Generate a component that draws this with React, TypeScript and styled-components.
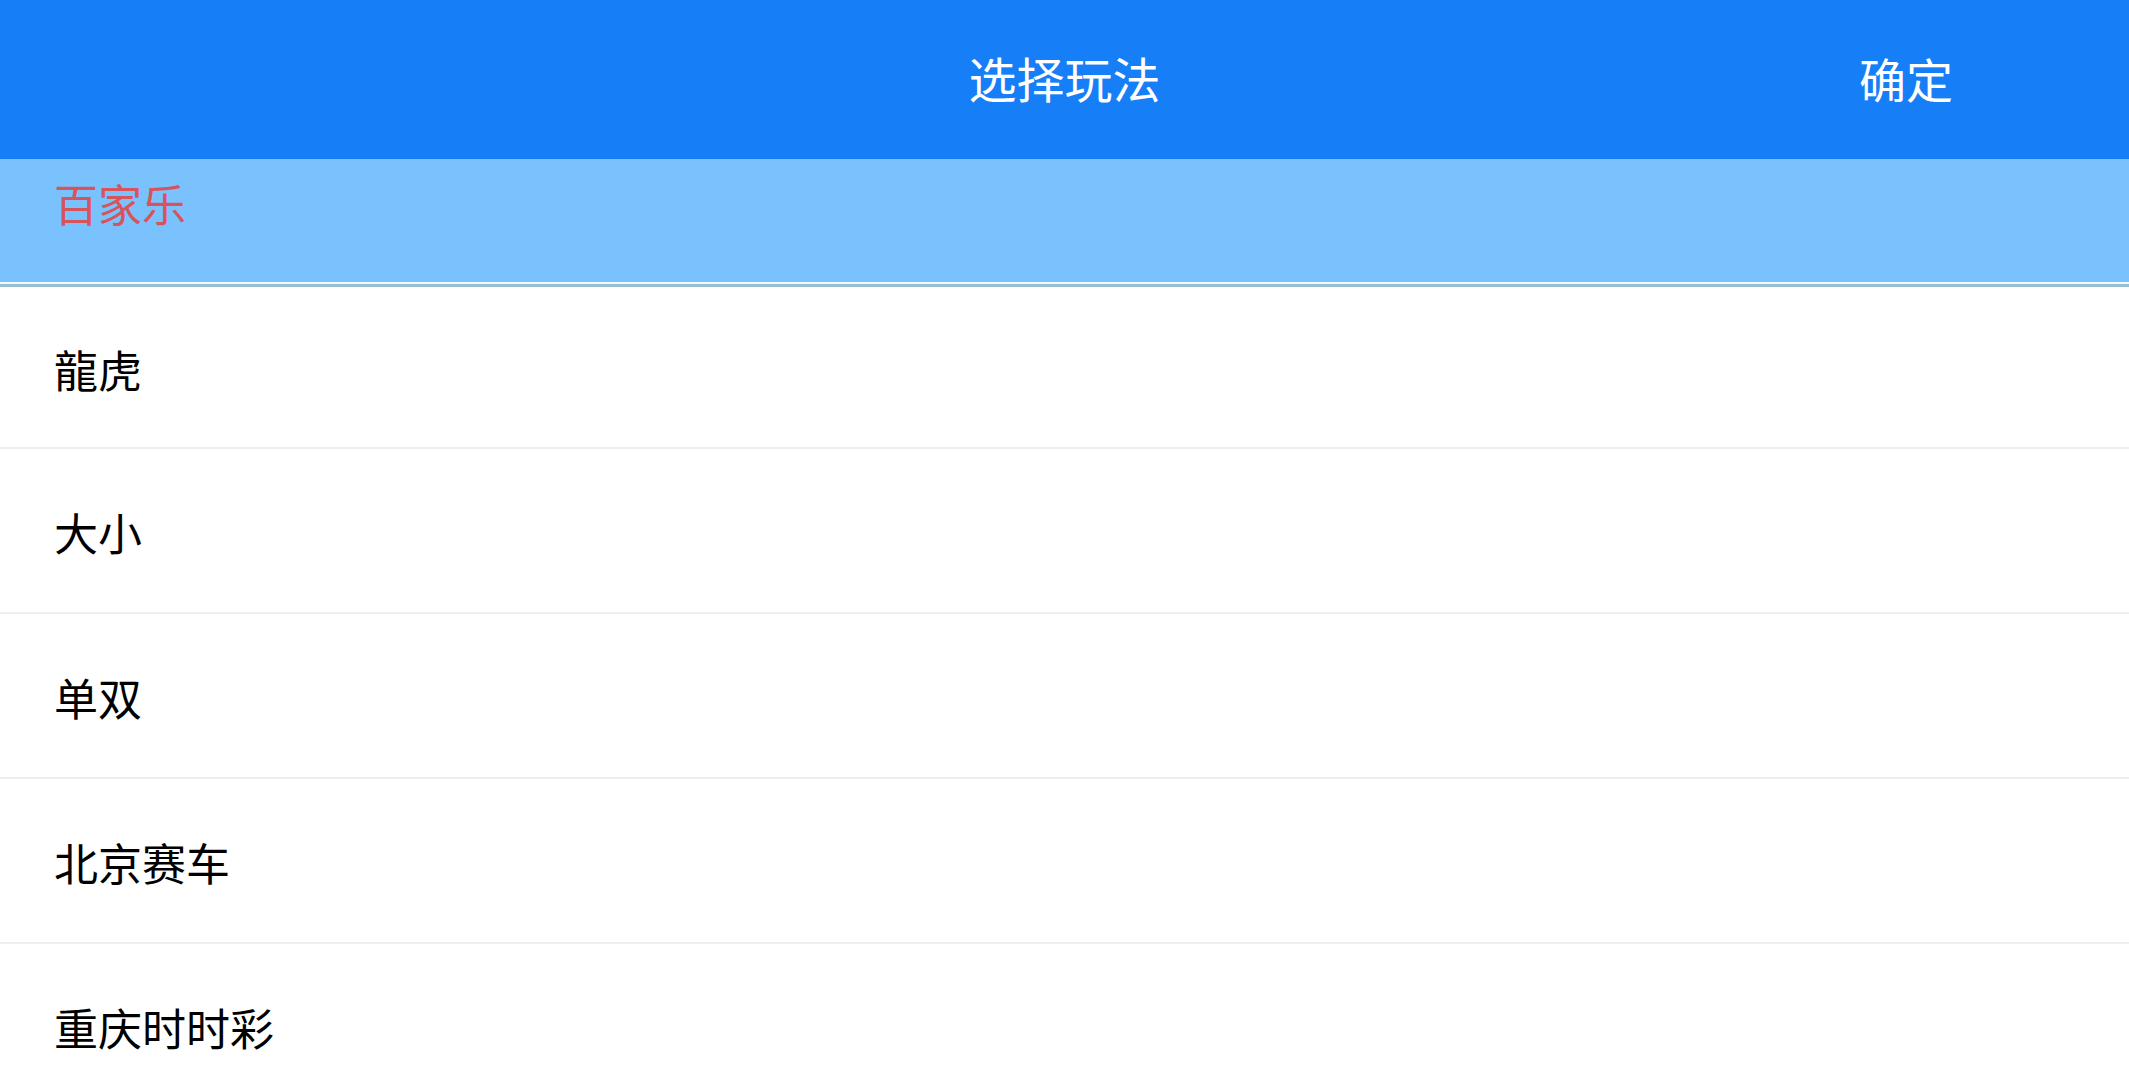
import styled, { createGlobalStyle } from 'styled-components';

const games = ['百家乐', '龍虎', '大小', '单双', '北京赛车', '重庆时时彩'];

function App() {
  const selected = 0;

  return (
    <>
      <GlobalStyle />
      <Page>
        <Header>
          <span />
          <Title>选择玩法</Title>
          <Confirm type='button'>确定</Confirm>
        </Header>
        <List>
          {games.map((name, i) => (
            <Item key={name} $active={i === selected}>
              {name}
            </Item>
          ))}
        </List>
      </Page>
    </>
  );
}

const GlobalStyle = createGlobalStyle`
  html, body {
    margin: 0;
    padding: 0;
    height: 100%;
    overflow: hidden;
    background: #ffffff;
  }

  body {
    font-family: "Noto Sans CJK SC", "Noto Sans", sans-serif;
  }
`;

const Page = styled.main`
  display: flex;
  flex-direction: column;
  width: 100%;
`;

const Header = styled.header`
  display: grid;
  grid-template-columns: 1fr auto 1fr;
  align-items: center;
  box-sizing: border-box;
  height: 159px;
  padding-bottom: 5px;
  background: #167ef6;
  color: #ffffff;
`;

const Title = styled.h1`
  margin: 0;
  font-size: 48px;
  font-weight: 400;
  line-height: 1;
`;

const Confirm = styled.button`
  justify-self: end;
  margin: 0 176px 0 0;
  padding: 0;
  border: 0;
  background: none;
  color: #ffffff;
  font-family: inherit;
  font-size: 47px;
  line-height: 1;
  cursor: pointer;
`;

const List = styled.ul`
  list-style: none;
  margin: 0;
  padding: 0;
`;

const Item = styled.li<{ $active?: boolean }>`
  display: flex;
  align-items: ${({ $active }) => ($active ? 'flex-start' : 'center')};
  box-sizing: border-box;
  padding: ${({ $active }) => ($active ? '22px 0 0 54px' : '3px 0 0 54px')};
  height: ${({ $active }) => ($active ? '128px' : '165px')};
  font-size: 44px;
  line-height: 1;
  color: ${({ $active }) => ($active ? '#d6545a' : '#000000')};
  background: ${({ $active }) => ($active ? '#79c2fe' : '#ffffff')};
  border-bottom: ${({ $active }) => ($active ? '3px solid #96bfd1' : '2px solid #eeeeee')};
  box-shadow: ${({ $active }) => ($active ? 'inset 0 -2px 0 #f2f9fd' : 'none')};

  &:nth-child(2) {
    height: 162px;
  }
`;

export default App;
